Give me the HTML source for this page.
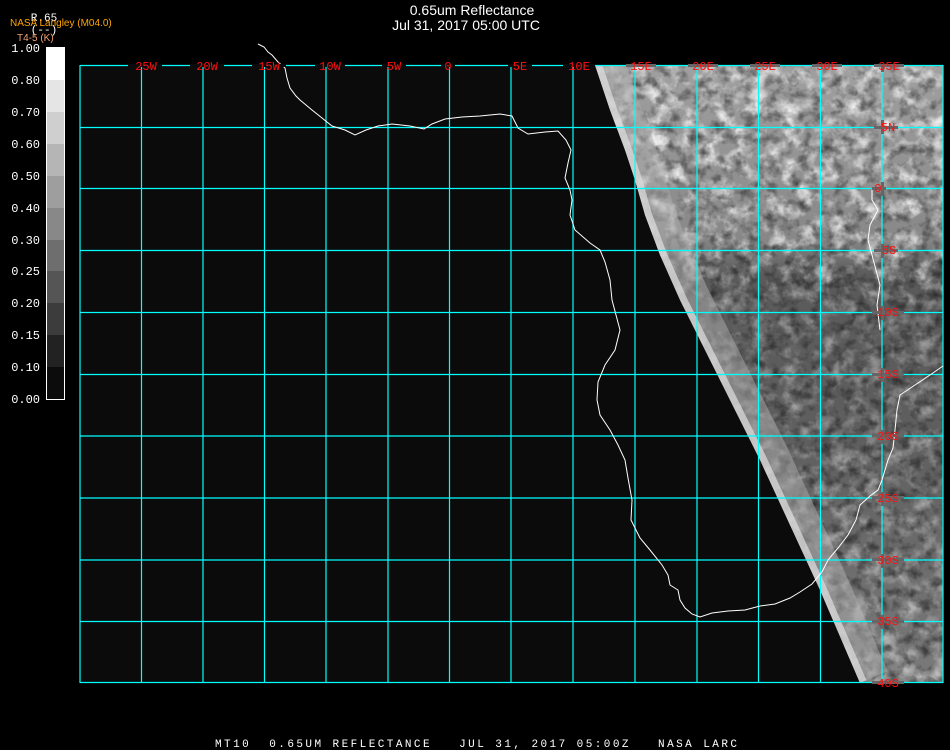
<!DOCTYPE html>
<html><head><meta charset="utf-8"><style>
html,body{margin:0;padding:0;background:#000;width:950px;height:750px;overflow:hidden}
svg{display:block}
</style></head><body>
<svg width="950" height="750" viewBox="0 0 950 750" xmlns="http://www.w3.org/2000/svg">
<defs>
<clipPath id="sat"><polygon points="595,65 943,65 943,683 860,683 820,590 790,525 760,460 730,400 700,340 680,300 660,255 645,215 635,180 625,150 610,110"/></clipPath>
<filter id="noise" x="0" y="0" width="100%" height="100%">
<feTurbulence type="fractalNoise" baseFrequency="0.06" numOctaves="4" seed="7"/>
<feColorMatrix type="matrix" values="0 0 0 0 1  0 0 0 0 1  0 0 0 0 1  2.6 0 0 0 -1.15"/>
</filter>
<filter id="noise2" x="0" y="0" width="100%" height="100%">
<feTurbulence type="fractalNoise" baseFrequency="0.09" numOctaves="3" seed="3"/>
<feColorMatrix type="matrix" values="0 0 0 0 0  0 0 0 0 0  0 0 0 0 0  0 2.4 0 0 -1.1"/>
</filter>
<linearGradient id="vg" x1="0" y1="0" x2="0" y2="1">
<stop offset="0" stop-color="#a0a0a0"/>
<stop offset="0.28" stop-color="#888"/>
<stop offset="0.34" stop-color="#5a5a5a"/>
<stop offset="0.6" stop-color="#5e5e5e"/>
<stop offset="1" stop-color="#7a7a7a"/>
</linearGradient>
<linearGradient id="mg" x1="0" y1="0" x2="0" y2="1">
<stop offset="0" stop-color="#fff"/><stop offset="0.3" stop-color="#fff"/><stop offset="0.4" stop-color="#777"/><stop offset="1" stop-color="#999"/>
</linearGradient>
<mask id="topm"><rect x="595" y="65" width="350" height="620" fill="url(#mg)"/></mask>
</defs>
<rect x="80" y="65" width="863" height="618" fill="#0b0b0b"/>
<g clip-path="url(#sat)">
<rect x="595" y="65" width="348" height="618" fill="url(#vg)"/>
<rect x="595" y="65" width="348" height="618" filter="url(#noise)" opacity="0.8" mask="url(#topm)"/>
<rect x="595" y="65" width="348" height="618" filter="url(#noise2)" opacity="0.5"/>
<polyline points="595,65 610,110 625,150 635,180 645,215 660,255 680,300 700,340 730,400 760,460 790,525 820,590 860,683" fill="none" stroke="#b0b0b0" stroke-width="60" opacity="0.5"/>
<polyline points="595,65 610,110 625,150 635,180 645,215 660,255 680,300 700,340 730,400 760,460 790,525 820,590 860,683" fill="none" stroke="#e0e0e0" stroke-width="14" opacity="0.7"/>
</g>
<g stroke="#00ffff" stroke-width="1.2" fill="none">
<line x1="80" y1="65" x2="80" y2="683"/><line x1="141.5" y1="65" x2="141.5" y2="683"/><line x1="203" y1="65" x2="203" y2="683"/><line x1="264.5" y1="65" x2="264.5" y2="683"/><line x1="326" y1="65" x2="326" y2="683"/><line x1="388" y1="65" x2="388" y2="683"/><line x1="449.5" y1="65" x2="449.5" y2="683"/><line x1="511" y1="65" x2="511" y2="683"/><line x1="573" y1="65" x2="573" y2="683"/><line x1="635" y1="65" x2="635" y2="683"/><line x1="697" y1="65" x2="697" y2="683"/><line x1="758.5" y1="65" x2="758.5" y2="683"/><line x1="820.5" y1="65" x2="820.5" y2="683"/><line x1="882" y1="65" x2="882" y2="683"/><line x1="943" y1="65" x2="943" y2="683"/>
<line x1="80" y1="65.5" x2="943" y2="65.5"/><line x1="80" y1="127.5" x2="943" y2="127.5"/><line x1="80" y1="188.5" x2="943" y2="188.5"/><line x1="80" y1="250.5" x2="943" y2="250.5"/><line x1="80" y1="312.5" x2="943" y2="312.5"/><line x1="80" y1="374.5" x2="943" y2="374.5"/><line x1="80" y1="436" x2="943" y2="436"/><line x1="80" y1="498" x2="943" y2="498"/><line x1="80" y1="560" x2="943" y2="560"/><line x1="80" y1="621.5" x2="943" y2="621.5"/><line x1="80" y1="682.5" x2="943" y2="682.5"/>
</g>
<polyline fill="none" stroke="#fff" stroke-width="1" points="258,44 264,47 268,52 272,55 278,62 285,68 287,78 290,88 296,96 300,100 312,110 322,118 332,126 345,130 355,135 366,130 378,126 392,124 410,126 424,129 432,124 445,119 462,117 480,116 500,114 512,116 518,128 528,134 545,132 558,131 566,140 571,150 568,163 565,178 570,190 572,200 570,215 575,230 590,243 600,250 605,262 610,280 612,300 616,315 620,330 615,350 605,365 598,382 597,400 600,415 610,430 618,445 625,460 628,478 632,500 631,520 640,538 650,550 662,565 668,575 670,585 678,590 680,600 685,608 692,614 700,617 712,613 728,611 745,610 760,606 775,604 790,598 800,592 812,584 822,572 828,560 838,548 848,535 856,520 860,505 870,496 878,490 882,480 885,470 888,460 893,448 895,430 897,410 900,395 915,385 930,375 943,366"/>
<polyline fill="none" stroke="#fff" stroke-width="1" points="880,330 877,305 880,285 876,270 872,255 868,240 870,225 878,210 872,200 872,190"/>
<g fill="#0b0b0b">
<rect x="128" y="64" width="34" height="3"/><rect x="190" y="64" width="34" height="3"/><rect x="252" y="64" width="34" height="3"/><rect x="315" y="64" width="30" height="3"/><rect x="382" y="64" width="24" height="3"/><rect x="441" y="64" width="14" height="3"/><rect x="508" y="64" width="24" height="3"/><rect x="563" y="64" width="32" height="3"/>
</g>
<g fill="#666">
<rect x="626" y="64" width="30" height="3"/><rect x="688" y="64" width="30" height="3"/><rect x="750" y="64" width="30" height="3"/><rect x="812" y="64" width="30" height="3"/><rect x="874" y="64" width="30" height="3"/>
<rect x="874" y="126" width="24" height="3"/><rect x="872" y="187" width="14" height="3"/><rect x="874" y="249" width="24" height="3"/><rect x="872" y="311" width="32" height="3"/><rect x="872" y="373" width="32" height="3"/><rect x="872" y="434" width="32" height="3"/><rect x="872" y="496" width="32" height="3"/><rect x="872" y="558" width="32" height="3"/><rect x="872" y="620" width="32" height="3"/><rect x="872" y="681" width="32" height="3"/>
<rect x="881" y="120" width="3" height="14"/><rect x="881" y="182" width="3" height="14"/><rect x="881" y="244" width="3" height="14"/><rect x="881" y="306" width="3" height="14"/><rect x="881" y="368" width="3" height="14"/><rect x="881" y="430" width="3" height="14"/><rect x="881" y="492" width="3" height="14"/><rect x="881" y="554" width="3" height="14"/><rect x="881" y="615" width="3" height="14"/><rect x="881" y="66" width="3" height="6"/>
</g>
<g font-family="'Liberation Mono',monospace" font-size="12" fill="#ff1010" text-anchor="middle">
<text x="146" y="70">25W</text><text x="207" y="70">20W</text><text x="269" y="70">15W</text><text x="330" y="70">10W</text><text x="394" y="70">5W</text><text x="448" y="70">0</text><text x="520" y="70">5E</text><text x="579" y="70">10E</text><text x="641" y="70">15E</text><text x="703" y="70">20E</text><text x="765" y="70">25E</text><text x="827" y="70">30E</text><text x="889" y="70">35E</text>
<text x="888" y="131">5N</text><text x="878" y="192">0</text><text x="889" y="254">5S</text><text x="888" y="316">10S</text><text x="888" y="378">15S</text><text x="888" y="440">20S</text><text x="888" y="502">25S</text><text x="888" y="564">30S</text><text x="888" y="625">35S</text><text x="888" y="687">40S</text>
</g>
<g>
<rect x="46" y="47" width="19" height="33" fill="#fff"/>
<rect x="46" y="80" width="19" height="32" fill="#e5e5e5"/>
<rect x="46" y="112" width="19" height="32" fill="#cfcfcf"/>
<rect x="46" y="144" width="19" height="32" fill="#b5b5b5"/>
<rect x="46" y="176" width="19" height="32" fill="#9e9e9e"/>
<rect x="46" y="208" width="19" height="32" fill="#888"/>
<rect x="46" y="240" width="19" height="31" fill="#6e6e6e"/>
<rect x="46" y="271" width="19" height="32" fill="#555"/>
<rect x="46" y="303" width="19" height="32" fill="#3c3c3c"/>
<rect x="46" y="335" width="19" height="32" fill="#222"/>
<rect x="46" y="367" width="19" height="33" fill="#0c0c0c"/>
<rect x="46.5" y="47.5" width="18" height="352" fill="none" stroke="#fff" stroke-width="1"/>
</g>
<g font-family="'Liberation Mono',monospace" font-size="12" fill="#fff" text-anchor="end">
<text x="40" y="52">1.00</text><text x="40" y="84">0.80</text><text x="40" y="116">0.70</text><text x="40" y="148">0.60</text><text x="40" y="180">0.50</text><text x="40" y="212">0.40</text><text x="40" y="244">0.30</text><text x="40" y="275">0.25</text><text x="40" y="307">0.20</text><text x="40" y="339">0.15</text><text x="40" y="371">0.10</text><text x="40" y="403">0.00</text>
<text x="44" y="21" text-anchor="middle" font-size="11">R.65</text>
<text x="44" y="33" text-anchor="middle" font-size="11">(--)</text>
</g>
<text x="10" y="26" font-family="'Liberation Sans',sans-serif" font-size="10" fill="#ffa500">NASA Langley (M04.0)</text>
<text x="17" y="41" font-family="'Liberation Sans',sans-serif" font-size="10" fill="#f4a070">T4-5 (K)</text>
<g font-family="'Liberation Sans',sans-serif" font-size="14" fill="#fff" text-anchor="middle">
<text x="472" y="15">0.65um Reflectance</text>
<text x="466" y="30">Jul 31, 2017 05:00 UTC</text>
</g>
<text x="215" y="747" font-family="'Liberation Mono',monospace" font-size="11" fill="#fff" textLength="522" lengthAdjust="spacing" xml:space="preserve">MT10  0.65UM REFLECTANCE   JUL 31, 2017 05:00Z   NASA LARC</text>
</svg>
</body></html>
